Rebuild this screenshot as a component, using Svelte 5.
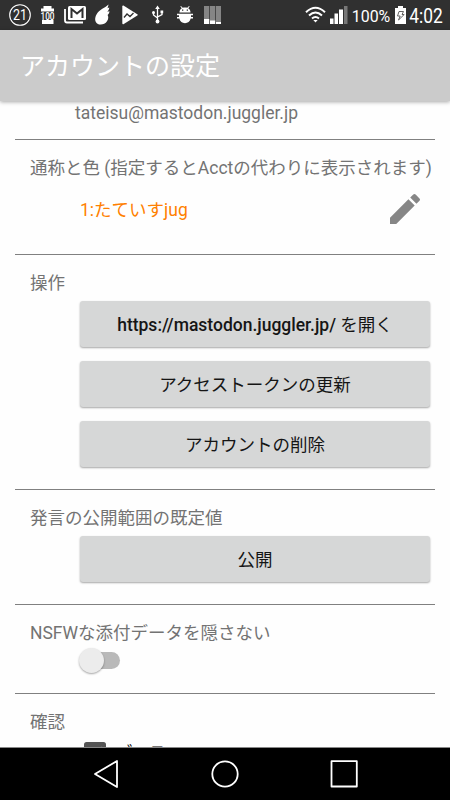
<script>
  let nsfwOpen = false;
  let confirmBoost = true;

  const actions = [
    { host: 'https://mastodon.juggler.jp/', label: ' を開く' },
    { label: 'アクセストークンの更新' },
    { label: 'アカウントの削除' },
  ];
</script>

<div class="screen">
  <div class="status">
    <svg width="225" height="30" viewBox="0 0 225 30">
      <circle cx="20" cy="15" r="10.3" fill="none" stroke="#fff" stroke-width="1.1" />
      <text x="20" y="20" font-size="14.5" textLength="14" lengthAdjust="spacingAndGlyphs">21</text>
      <path fill="#fff" d="M43.500 6h8v2.500H54V11.500H41V8.500h2.500zM42 20h11.500v4H42z" />
      <text x="47.500" y="19.600" font-size="10.500" font-weight="500" textLength="14" lengthAdjust="spacingAndGlyphs">100</text>
      <path fill="none" stroke="#fff" stroke-width="1.8" d="M65 9v11.500q0 2 2 2h16" />
      <rect x="68" y="6" width="18" height="14" rx="1.5" fill="#fff" />
      <path fill="none" stroke="#303030" stroke-width="2" d="M71.500 18V9l5.500 4.500L82.500 9v9" />
      <path fill="#fff" d="M108.600 4.500C105.500 7.500 99 9.500 96.500 14.500c-2 3.500-1.700 7.500 1 9.200 3 1.800 7.500.6 9.500-2.500 1.700-2.500 1.500-4.700.6-6.200 1-.9 1.700-2.200 1.900-3.800l-2.200.5c1.200-1.300 2-2.700 2-4.200l-1.800.8z" />
      <path fill="#fff" d="M122.300 6.500c0-1 .7-1.200 1.500-.8l13.500 8.500c.6.400.6 1 0 1.400l-13.500 8.500c-.8.400-1.500.2-1.500-.8z" />
      <path fill="none" stroke="#303030" stroke-width="1.300" d="M124 17.500l3-3.500 3 2.500 3.500-3.500" />
      <g fill="none" stroke="#fff" stroke-width="1.300">
        <path d="M157.500 8v13M153.500 12.500v2.500l4 3M162 12v2.500l-4.500 2.500" />
      </g>
      <path fill="#fff" d="M157.500 5.500l2.300 3.500h-4.600zM160.500 10.500h2.700v2.700h-2.700z" />
      <circle cx="153.500" cy="12.500" r="1.500" fill="#fff" />
      <circle cx="157.500" cy="21.500" r="1.900" fill="#fff" />
      <path fill="#fff" d="M179.500 12.500c0-2.300 1-3.500 2.300-4.200L180.300 6.500l.7-.6 1.700 1.900c1.500-.5 3.100-.5 4.600 0L189 5.900l.7.600-1.500 1.800c1.300.7 2.300 1.900 2.300 4.200zM177 13.800h16v1.500h-2v1.800h2v1.500h-2.300c-.7 3-2.900 4.600-5.700 4.600s-5-1.600-5.700-4.600H177v-1.500h2v-1.800h-2z" />
      <path fill="#303030" d="M182 9.500h1.300v1.300H182zM186.700 9.500h1.300v1.300h-1.300z" />
      <path fill="#858585" d="M204 6h5.300v13H204zM210 6h5.300v15H210zM216 6h5v16h-5z" />
      <path fill="#fff" d="M204 19h5.300v5H204zM210 20.500h5.300V24H210zM216 22h5v2h-5z" />
    </svg>
    <svg width="225" height="30" viewBox="225 0 225 30">
      <g fill="none" stroke="#fff" stroke-width="2">
        <path d="M306 12.200q9.500-8.800 19 0M309 15.500q6.500-6 13 0M312 18.500q3.500-3 7 0" />
      </g>
      <path fill="#fff" d="M313.300 20h4.400l-2.200 2.500zM330 18.500h3.500V24H330zM334.500 13.500h3.500V24h-3.500zM339 9.500h4V24h-4z" />
      <path fill="#777" d="M344 6h3.500v18H344z" />
      <text x="371" y="21.500" font-size="17" textLength="38.500" lengthAdjust="spacingAndGlyphs">100%</text>
      <path fill="#fff" d="M398 6h5v2h3v16h-11V8h3z" />
      <path fill="none" stroke="#555" stroke-width=".9" d="M399 11.500h4.500l-1.500 3h2.200L398.500 20l1.700-4H397.500z" />
      <text x="426" y="22.500" font-size="19.500" textLength="33.500" lengthAdjust="spacingAndGlyphs">4:02</text>
    </svg>
  </div>

  <header>アカウントの設定</header>

  <main>
    <section class="user">
      <p>tateisu@mastodon.juggler.jp</p>
    </section>

    <section class="nickname">
      <h2>通称と色 (指定するとAcctの代わりに表示されます)</h2>
      <div class="row">
        <span class="name">1:たていすjug</span>
        <svg width="40" height="40" viewBox="0 0 24 24">
          <path fill="#868686" d="M3 17.250V21h3.750L17.810 9.940l-3.750-3.750L3 17.250zM20.710 7.040a1 1 0 0 0 0-1.410l-2.340-2.340a1 1 0 0 0-1.410 0l-1.830 1.830 3.750 3.750 1.830-1.830z" />
        </svg>
      </div>
    </section>

    <section class="actions">
      <h2>操作</h2>
      <div class="buttons">
        {#each actions as action}
          <button>{#if action.host}<b>{action.host}</b>{/if}{action.label}</button>
        {/each}
      </div>
    </section>

    <section class="visibility">
      <h2>発言の公開範囲の既定値</h2>
      <div class="buttons">
        <button>公開</button>
      </div>
    </section>

    <section class="nsfw">
      <h2>NSFWな添付データを隠さない</h2>
      <div class="switch" class:on={nsfwOpen} on:click={() => (nsfwOpen = !nsfwOpen)}>
        <i></i>
      </div>
    </section>

    <section class="confirm">
      <h2>確認</h2>
      <div class="check" on:click={() => (confirmBoost = !confirmBoost)}>
        <svg width="22" height="22" viewBox="0 0 22 22">
          <rect width="22" height="22" rx="2.500" fill="#555" />
          {#if confirmBoost}
            <path fill="none" stroke="#fff" stroke-width="2.500" d="M4 11l5 5 9.500-10.500" />
          {/if}
        </svg>
        <span>ブース</span>
      </div>
    </section>
  </main>

  <nav>
    <svg width="450" height="52" viewBox="0 0 450 52">
      <g fill="none" stroke="#fff" stroke-width="1.800" stroke-linejoin="round">
        <path d="M117 13v26L95 26z" />
        <circle cx="225" cy="26" r="12.700" />
        <path d="M331.500 13.200h25.300v25.300h-25.300z" />
      </g>
    </svg>
  </nav>
</div>

<style>
  :global(body) {
    margin: 0;
  }
  .screen {
    display: flex;
    flex-direction: column;
    width: 450px;
    height: 800px;
    overflow: hidden;
    background: #fefefe;
    color: #737373;
    font-family: Roboto, 'Noto Sans CJK JP', sans-serif;
    font-size: 17.5px;
  }
  .status {
    display: flex;
    flex: none;
    height: 30px;
    background: #303030;
  }
  .status text {
    fill: #fff;
    text-anchor: middle;
  }
  header {
    position: relative;
    flex: none;
    height: 71px;
    padding-left: 20px;
    background: #cbcbcb;
    box-shadow: 0 1px 4px rgba(0, 0, 0, .35);
    color: #fff;
    font-size: 25px;
    line-height: 73px;
  }
  main {
    flex: 1;
    min-height: 0;
    overflow: hidden;
    padding: 0 15px;
  }
  section {
    box-sizing: border-box;
    padding: 18px 5px 0 15px;
    border-bottom: 1px solid #808080;
  }
  h2, p {
    margin: 0;
    font-size: inherit;
    font-weight: 400;
    line-height: 20px;
    white-space: nowrap;
  }
  .user {
    height: 39px;
    padding: 2px 0 0 60px;
  }
  .nickname,
  .visibility {
    height: 115px;
  }
  .actions {
    height: 235px;
  }
  .row {
    display: flex;
    align-items: center;
    justify-content: space-between;
    height: 40px;
    margin-top: 11px;
    padding: 0 5px 0 50px;
  }
  .name {
    margin-bottom: 2px;
    color: #ff8000;
  }
  .buttons {
    display: flex;
    flex-direction: column;
    gap: 14px;
    padding: 8px 0 0 50px;
  }
  button {
    height: 46px;
    padding: 0 0 2px;
    border: 0;
    border-radius: 3px;
    background: #d6d7d7;
    box-shadow: 0 1px 2px rgba(0, 0, 0, .35);
    color: #151515;
    font: 400 17.5px Roboto, 'Noto Sans CJK JP', sans-serif;
  }
  button b {
    font-weight: 500;
  }
  .nsfw {
    height: 89px;
  }
  .switch {
    display: flex;
    align-items: center;
    width: 36px;
    height: 17px;
    margin: 9px 0 0 54px;
    border-radius: 9px;
    background: #b9b9b9;
  }
  .switch i {
    width: 25px;
    height: 25px;
    margin-left: -5px;
    border-radius: 50%;
    background: #ececec;
    box-shadow: 0 1px 2px rgba(0, 0, 0, .35);
  }
  .switch.on i {
    margin-left: 16px;
  }
  .confirm {
    border: 0;
  }
  .check {
    display: flex;
    padding: 10px 0 0 54px;
  }
  .check span {
    margin: 1px 0 0 9px;
    color: #000;
    line-height: 20px;
  }
  nav {
    flex: none;
    height: 52px;
    border-top: 1px solid #888;
    background: #000;
  }
</style>
